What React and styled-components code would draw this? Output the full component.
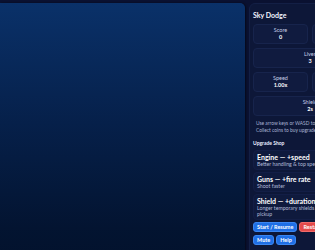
import React from "react";
import styled, { createGlobalStyle } from "styled-components";

const GlobalStyle = createGlobalStyle`
  html, body {
    margin: 0;
    padding: 0;
    background: #0a1131;
    overflow: hidden;
  }
  body {
    font-family: Lato, "Noto Sans", sans-serif;
    color: #e6ecff;
  }
`;

const Layout = styled.div`
  display: flex;
  align-items: flex-start;
  gap: 4px;
  padding-top: 3px;
  width: 400px;
`;

const GameCanvas = styled.div`
  flex: 0 0 245px;
  height: 300px;
  border-radius: 0 5px 5px 0;
  background: linear-gradient(180deg, #0a3169 0%, #06204a 40%, #031431 75%, #020f27 100%);
  box-shadow: 1px 0 2px rgba(0, 0, 0, 0.5);
`;

const Sidebar = styled.div`
  flex: 0 0 122px;
  box-sizing: border-box;
  padding: 5px 3px;
  background: #0d1738;
  border-radius: 6px;
  border: 1px solid #131f45;
`;

const Title = styled.div`
  font-size: 7px;
  font-weight: 700;
  line-height: 10px;
  margin: 1px 0 4px;
  color: #f2f5ff;
`;

const StatGrid = styled.div`
  display: grid;
  grid-template-columns: 1fr 1fr;
  gap: 4px;
`;

const StatBox = styled.div`
  grid-column: ${(p) => (p.$wide ? "1 / span 2" : "auto")};
  height: 20px;
  box-sizing: border-box;
  display: flex;
  flex-direction: column;
  align-items: center;
  justify-content: center;
  background: #101b3f;
  border: 1px solid #17244c;
  border-radius: 4px;
  line-height: 7px;
`;

const StatLabel = styled.div`
  font-size: 5.5px;
  color: #c5cde6;
`;

const StatValue = styled.div`
  font-size: 5.5px;
  font-weight: 700;
  color: #ffffff;
`;

const Hint = styled.div`
  margin-top: 4px;
  padding-left: 3px;
  font-size: 4.85px;
  line-height: 7px;
  color: #aab4d4;
  white-space: nowrap;
`;

const SectionTitle = styled.div`
  margin: 6px 0 3px;
  font-size: 5px;
  font-weight: 700;
  line-height: 7px;
  color: #e9eeff;
`;

const CardList = styled.div`
  display: flex;
  flex-direction: column;
  gap: 2px;
`;

const Card = styled.div`
  box-sizing: border-box;
  padding: 2px 3px;
  background: #0f1a3d;
  border: 1px solid #131e46;
  border-radius: 4px;
`;

const CardTitle = styled.div`
  font-size: 7px;
  font-weight: 700;
  line-height: 8px;
  color: #ffffff;
  white-space: nowrap;
`;

const CardDesc = styled.div`
  max-width: 76px;
  font-size: 5.2px;
  line-height: 6px;
  color: #b3bcd9;
`;

const ButtonRow = styled.div`
  display: flex;
  gap: 2px;
  margin-top: ${(p) => p.$top || 3}px;
`;

const Button = styled.button`
  font-family: inherit;
  font-size: 5.5px;
  font-weight: 700;
  line-height: 7px;
  color: #ffffff;
  background: ${(p) => (p.$danger ? "#e34b4b" : "#1f6fe5")};
  border: 1px solid ${(p) => (p.$danger ? "#f06a6a" : "#3a86f2")};
  border-radius: 3px;
  padding: 1px 3px;
  height: 10px;
  white-space: nowrap;
`;

const stats = [
  { label: "Score", value: "0" },
  { label: "Coins", value: "0" },
  { label: "Lives", value: "3", wide: true },
  { label: "Speed", value: "1.00x" },
  { label: "Level", value: "1" },
  { label: "Shield", value: "2s", wide: true },
];

const upgrades = [
  { title: "Engine — +speed", desc: "Better handling & top speed" },
  { title: "Guns — +fire rate", desc: "Shoot faster" },
  { title: "Shield — +duration", desc: "Longer temporary shields from pickup" },
];

export default function App() {
  return (
    <>
      <GlobalStyle />
      <Layout>
        <GameCanvas />
        <Sidebar>
          <Title>Sky Dodge</Title>
          <StatGrid>
            {stats.map((s) => (
              <StatBox key={s.label} $wide={s.wide}>
                <StatLabel>{s.label}</StatLabel>
                <StatValue>{s.value}</StatValue>
              </StatBox>
            ))}
          </StatGrid>
          <Hint>
            Use arrow keys or WASD to move.
            <br />
            Collect coins to buy upgrades.
          </Hint>
          <SectionTitle>Upgrade Shop</SectionTitle>
          <CardList>
            {upgrades.map((u) => (
              <Card key={u.title}>
                <CardTitle>{u.title}</CardTitle>
                <CardDesc>{u.desc}</CardDesc>
              </Card>
            ))}
          </CardList>
          <ButtonRow $top={2}>
            <Button>Start / Resume</Button>
            <Button $danger>Restart</Button>
          </ButtonRow>
          <ButtonRow>
            <Button>Mute</Button>
            <Button>Help</Button>
          </ButtonRow>
          <Hint>Tip: dodge clouds and birds.</Hint>
        </Sidebar>
      </Layout>
    </>
  );
}
